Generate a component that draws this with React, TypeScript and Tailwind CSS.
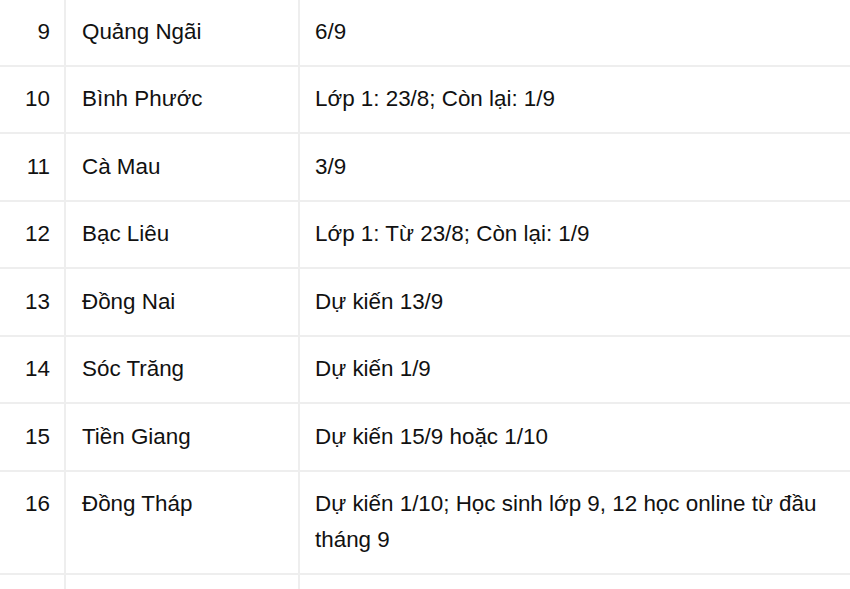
const rows: [string, string, string][] = [
  ["9", "Quảng Ngãi", "6/9"],
  ["10", "Bình Phước", "Lớp 1: 23/8; Còn lại: 1/9"],
  ["11", "Cà Mau", "3/9"],
  ["12", "Bạc Liêu", "Lớp 1: Từ 23/8; Còn lại: 1/9"],
  ["13", "Đồng Nai", "Dự kiến 13/9"],
  ["14", "Sóc Trăng", "Dự kiến 1/9"],
  ["15", "Tiền Giang", "Dự kiến 15/9 hoặc 1/10"],
  ["16", "Đồng Tháp", "Dự kiến 1/10; Học sinh lớp 9, 12 học online từ đầu tháng 9"],
  ["17", "", ""],
];

export default function App() {
  return (
    <div className="w-[850px] h-[589px] overflow-hidden bg-white">
      <div
        className="-mt-[3px] text-[22.4px] leading-[36px] text-[#111]"
        style={{ fontFamily: '"Liberation Sans", Arial, sans-serif' }}
      >
        {rows.map(([n, name, date], i) => (
          <div
            key={i}
            className="grid grid-cols-[66px_234px_1fr] border-t-2 border-[#eeeeee]"
          >
            <div className="border-r-2 border-[#eeeeee] pr-[14px] py-[14.75px] text-right">
              {i < rows.length - 1 ? n : ""}
            </div>
            <div className="border-r-2 border-[#eeeeee] px-[16px] py-[14.75px]">{name}</div>
            <div className="px-[15px] py-[14.75px]">{date}</div>
          </div>
        ))}
      </div>
    </div>
  );
}
